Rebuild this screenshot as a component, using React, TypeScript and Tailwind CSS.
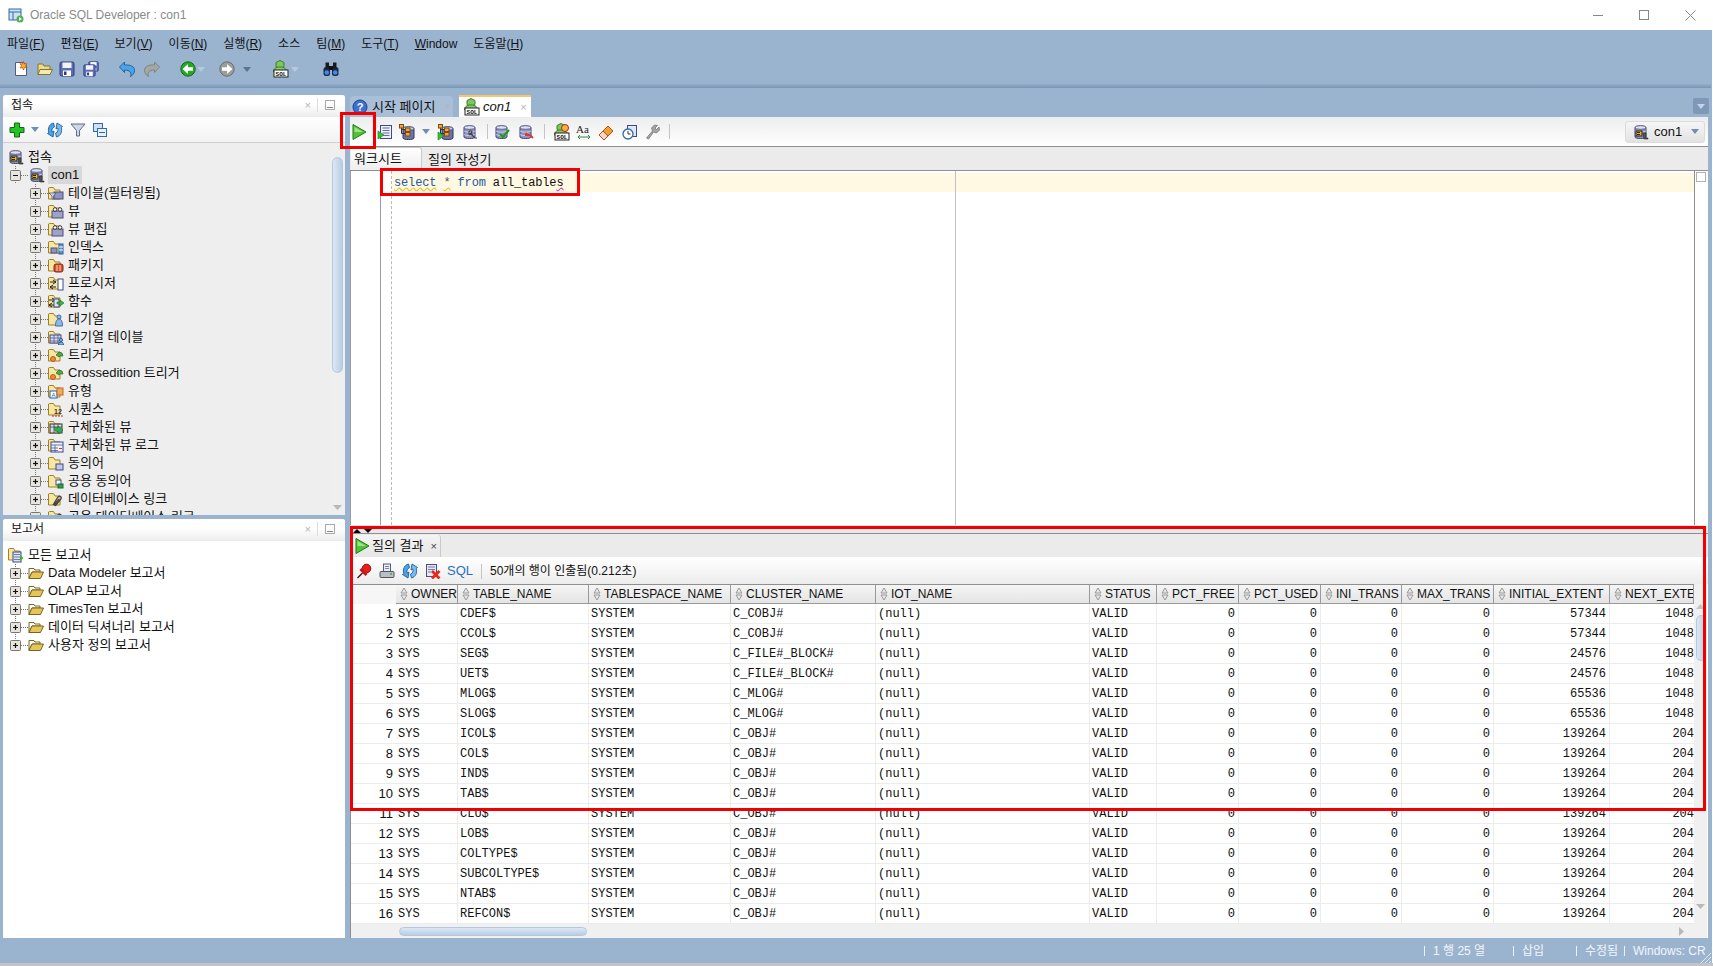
import type { ReactNode } from "react";

const Svg = ({ children, w = 16, h = 16, className = "" }: { children: ReactNode; w?: number; h?: number; className?: string }) => (
  <svg width={w} height={h} viewBox={`0 0 ${w} ${h}`} className={`shrink-0 ${className}`}>
    {children}
  </svg>
);

const DbBody = () => (
  <>
    <path d="M2 3.500C2 1.500 13 1.500 13 3.500V13C13 15 2 15 2 13Z" fill="#8e93c4" stroke="#3f4370" />
    <ellipse cx="7.500" cy="3.500" rx="5.500" ry="1.800" fill="#dfe1f2" stroke="#3f4370" strokeWidth="0.7" />
    <path d="M2 7c2 1.600 9 1.600 11 0M2 10.500c2 1.600 9 1.600 11 0" fill="none" stroke="#d8daf0" strokeWidth="0.8" />
  </>
);

const Db = () => (
  <Svg>
    <DbBody />
    <rect x="3" y="7" width="6" height="5" fill="#f2b90f" stroke="#222" />
    <path d="M4 8.500h3M4 10.500h3" stroke="#222" />
    <path d="M10 9h3v5h2v1h-4z" fill="#555" stroke="#222" strokeWidth="0.6" />
  </Svg>
);

// database with the orange plan boxes, optional green arrow on the left
const PlanDb = ({ arrow = false }: { arrow?: boolean }) => (
  <Svg w={18} h={18}>
    <path d="M5 5.500C5 3.500 16 3.500 16 5.500V15C16 17 5 17 5 15Z" fill="#6f74a8" stroke="#2f3360" />
    <ellipse cx="10.500" cy="5.500" rx="5.500" ry="1.800" fill="#cfd2ea" stroke="#2f3360" strokeWidth="0.7" />
    <path d="M3.500 3.500v7h5M3.500 6.500h5" fill="none" stroke="#333" />
    <rect x="1.500" y="1.500" width="4" height="3.500" fill="#f2a93a" stroke="#7a4a10" />
    <rect x="7.500" y="5" width="4.500" height="3.500" fill="#f2a93a" stroke="#7a4a10" />
    <rect x="7.500" y="9.500" width="4.500" height="3.500" fill="#f2a93a" stroke="#7a4a10" />
    {arrow && <path d="M1 9l6 4-6 4z" fill="#35c235" stroke="#1c7a1c" strokeWidth="0.6" />}
  </Svg>
);

const SqlIcon = ({ badge = false }: { badge?: boolean }) => (
  <Svg w={18} h={18}>
    <path d="M9 0.500l4 2v4l-4 2-4-2v-4z" fill="#7cc85a" stroke="#3f7d2c" />
    <path d="M2.500 12c0-3 2-5 6.500-5s6.500 2 6.500 5z" fill="#8ccb6a" stroke="#3f7d2c" />
    <rect x="3" y="10" width="14" height="7" fill="#fff" stroke="#222" />
    <text x="10" y="16" textAnchor="middle" fontSize="6" fontFamily="'Liberation Mono',monospace" fontWeight="700" fill="#111">SOL</text>
    {badge && <circle cx="13" cy="5" r="3.500" fill="#f4b53a" stroke="#b3261e" />}
  </Svg>
);

const Run = () => (
  <Svg w={18} h={18}>
    <path d="M3 1.500L16 9 3 16.500Z" fill="#52c23a" stroke="#1f7a1a" strokeLinejoin="round" />
    <path d="M4.500 4L13 9 4.500 9Z" fill="#9be67f" />
  </Svg>
);

const Drop = ({ color = "#6f8db5" }: { color?: string }) => (
  <Svg w={8} h={5}>
    <path d="M0 0h8L4 5Z" fill={color} />
  </Svg>
);

const Refresh = () => (
  <Svg>
    <path d="M6.500 1C2.500 2 0.500 6 1.800 10.500L0.500 11.500 6 15 7 9 5.200 10C4.500 8 5 5.500 7.500 4.800Z" fill="#4da3e8" stroke="#1d5d98" strokeWidth="0.9" />
    <path d="M6.500 1C2.500 2 0.500 6 1.800 10.500L0.500 11.500 6 15 7 9 5.200 10C4.500 8 5 5.500 7.500 4.800Z" transform="rotate(180 8 8)" fill="#79bdf2" stroke="#1d5d98" strokeWidth="0.9" />
  </Svg>
);

const Floppy = ({ x = 0, y = 0, s = 16 }: { x?: number; y?: number; s?: number }) => (
  <g transform={`translate(${x} ${y}) scale(${s / 16})`}>
    <rect x="1" y="1" width="14" height="14" rx="1.500" fill="#5d6cb4" stroke="#2f3a78" />
    <rect x="3.500" y="1.500" width="9" height="5.500" fill="#f1f2fa" />
    <rect x="4" y="9.500" width="8" height="5.500" fill="#fff" />
    <rect x="5" y="10.500" width="2.500" height="3.500" fill="#2f3a78" />
  </g>
);

const overlays: Record<string, ReactNode> = {
  filter: (
    <>
      <rect x="6" y="7" width="9" height="7" fill="#8f93c0" stroke="#4b4f7c" />
      <path d="M1 8h7L5.500 11v3L4 14v-3z" fill="#cfd2ea" stroke="#4b4f7c" strokeWidth="0.7" />
    </>
  ),
  view: (
    <>
      <rect x="4" y="8" width="11" height="7" fill="#9ea2c8" stroke="#4b4f7c" />
      <circle cx="7" cy="6.500" r="1.800" fill="#fff" stroke="#333" />
      <circle cx="12" cy="6.500" r="1.800" fill="#fff" stroke="#333" />
    </>
  ),
  index: (
    <>
      <rect x="3" y="9" width="6" height="5" fill="#8f93c0" stroke="#4b4f7c" />
      <rect x="11" y="5" width="4" height="10" fill="#5b9bd5" stroke="#2c5c8c" />
      <path d="M11 8h4M11 11h4" stroke="#fff" />
    </>
  ),
  pack: (
    <>
      <rect x="6" y="7" width="9" height="8" rx="2" fill="#d9533a" stroke="#8a2415" />
      <path d="M9 8v6M12 8v6" stroke="#f6d7a0" />
    </>
  ),
  proc: (
    <>
      <rect x="10" y="4" width="5" height="11" fill="#fff" stroke="#3f4a8a" />
      <path d="M2 7h6M5 5l3 2-3 2M2 12h6M5 10l-3 2 3 2" fill="none" stroke="#222" />
    </>
  ),
  func: (
    <>
      <path d="M1 7h6M4 5l3 2-3 2M1 12h5M4 10l-3 2 3 2" fill="none" stroke="#222" />
      <rect x="6" y="6" width="5" height="8" fill="#dfe3f5" stroke="#3f4a8a" />
      <path d="M9 9h3V7l4 3-4 3v-2H9z" fill="#3cb43c" stroke="#1d741d" strokeWidth="0.6" />
    </>
  ),
  queue: (
    <>
      <circle cx="11" cy="6" r="2" fill="#8bb8e8" stroke="#3d6ea8" />
      <path d="M7.500 15c0-5 1.500-7 3.500-7s3.500 2 3.500 7z" fill="#8bb8e8" stroke="#3d6ea8" />
    </>
  ),
  qtable: (
    <>
      <rect x="2" y="6" width="11" height="8" fill="#d9dcf0" stroke="#3f4a8a" />
      <path d="M2 9h11M2 12h11M6 6v8M10 6v8" stroke="#3f4a8a" strokeWidth="0.7" />
      <circle cx="13" cy="11" r="1.600" fill="#8bb8e8" stroke="#2c5c8c" />
      <path d="M10.500 16c0-2 1-3 2.500-3s2.500 1 2.500 3z" fill="#8bb8e8" stroke="#2c5c8c" />
    </>
  ),
  trigger: (
    <>
      <circle cx="5" cy="12" r="2.500" fill="#ef8a3c" stroke="#c05a14" />
      <path d="M8 8l3-3 3 1 1 3h-3l-1 1z" fill="#4da84a" stroke="#276d25" strokeWidth="0.7" />
    </>
  ),
  type: (
    <>
      <rect x="2" y="8" width="7" height="7" fill="#fff" stroke="#1f5cb0" />
      <rect x="9" y="5" width="6" height="7" fill="#f5a85a" stroke="#b96a20" />
      <text x="5.500" y="14" textAnchor="middle" fontSize="6" fill="#1f5cb0" fontFamily="'Liberation Sans',sans-serif">A</text>
    </>
  ),
  seq: (
    <>
      <text x="6" y="13" fontSize="7" fontWeight="700" fill="#333" fontFamily="'Liberation Sans',sans-serif">12</text>
      <path d="M4 15h11" stroke="#c22" strokeDasharray="2 1" />
    </>
  ),
  mview: (
    <>
      <rect x="2" y="5" width="12" height="9" fill="#d9dcf0" stroke="#333" />
      <path d="M2 8h12M6 5v9M10 5v9" stroke="#333" strokeWidth="0.7" />
      <path d="M6 8l4 1V7l5 4-4 4v-2L7 12z" fill="#2fb04a" stroke="#156b26" strokeWidth="0.6" />
    </>
  ),
  mlog: (
    <>
      <rect x="3" y="5" width="12" height="10" fill="#eef0fa" stroke="#3f4a8a" />
      <path d="M3 8h12M3 11h7M3 13.500h7M7 8v7" stroke="#3f4a8a" strokeWidth="0.7" />
      <path d="M11 11.500h3" stroke="#d33" />
    </>
  ),
  syn: <rect x="8" y="9" width="7" height="6" fill="#c4c8e8" stroke="#3f4a8a" />,
  psyn: (
    <>
      <rect x="8" y="7" width="5" height="5" fill="#fff" stroke="#3f4a8a" />
      <rect x="10" y="11" width="5" height="4" fill="#2fa04a" stroke="#156b26" />
    </>
  ),
  link: <path d="M5 14l5-8c2-2 4 0 3 2l-5 6c-1 1-2 0-1-1l4-5" fill="none" stroke="#444" strokeWidth="1.300" />,
};

const FolderIcon = ({ kind }: { kind?: string }) => (
  <Svg>
    <path d="M0.500 3V14H12V5H7L5.500 2.500H1.500Z" fill="#f6e7a4" stroke="#a3801d" />
    {kind && overlays[kind]}
  </Svg>
);

const OpenFolder = () => (
  <Svg>
    <path d="M1 3.500h5l1 1.500h5v2H4L1 13.500z" fill="#fff" stroke="#7a6420" />
    <path d="M1 13.500L4 7h11.500l-3 6.500z" fill="#e6c65a" stroke="#7a6420" />
  </Svg>
);

const ReportRoot = () => (
  <Svg>
    <path d="M0.500 2V13H12V4H7L5.500 1.500H1.500Z" fill="#f6e7a4" stroke="#a3801d" />
    <rect x="5" y="5" width="8" height="10" fill="#dfe3f5" stroke="#3f4a8a" />
    <path d="M6 7.500h6M6 10h6M6 12.500h6" stroke="#3f4a8a" strokeWidth="0.7" />
    <path d="M12 8l3.500 3-3.500 3z" fill="#35b535" />
  </Svg>
);

// the dotted tree lines and the +/- box
const Expander = ({ minus = false, last = false, w = 19 }: { minus?: boolean; last?: boolean; w?: number }) => (
  <Svg w={w} h={18}>
    <path d={last ? "M6.500 0V9" : "M6.500 0V18"} stroke="#777" strokeDasharray="1 1" />
    <path d={`M12 9.500H${w}`} stroke="#777" strokeDasharray="1 1" />
    <rect x="1.500" y="4.500" width="10" height="10" rx="1" fill="#e6e4dc" stroke="#77756c" />
    <path d="M4 9.500h5" stroke="#111" strokeWidth="1.200" />
    {!minus && <path d="M6.500 7v5" stroke="#111" strokeWidth="1.200" />}
  </Svg>
);

const menus: [string, string][] = [
  ["파일(", "F"],
  ["편집(", "E"],
  ["보기(", "V"],
  ["이동(", "N"],
  ["실행(", "R"],
  ["소스", ""],
  ["팀(", "M"],
  ["도구(", "T"],
  ["", "W"],
  ["도움말(", "H"],
];

const treeItems: [string, string][] = [
  ["테이블(필터링됨)", "filter"],
  ["뷰", "view"],
  ["뷰 편집", "view"],
  ["인덱스", "index"],
  ["패키지", "pack"],
  ["프로시저", "proc"],
  ["함수", "func"],
  ["대기열", "queue"],
  ["대기열 테이블", "qtable"],
  ["트리거", "trigger"],
  ["Crossedition 트리거", "trigger"],
  ["유형", "type"],
  ["시퀀스", "seq"],
  ["구체화된 뷰", "mview"],
  ["구체화된 뷰 로그", "mlog"],
  ["동의어", "syn"],
  ["공용 동의어", "psyn"],
  ["데이터베이스 링크", "link"],
  ["공용 데이터베이스 링크", "link"],
];

const reports = ["Data Modeler 보고서", "OLAP 보고서", "TimesTen 보고서", "데이터 딕셔너리 보고서", "사용자 정의 보고서"];

const columns = ["OWNER", "TABLE_NAME", "TABLESPACE_NAME", "CLUSTER_NAME", "IOT_NAME", "STATUS", "PCT_FREE", "PCT_USED", "INI_TRANS", "MAX_TRANS", "INITIAL_EXTENT", "NEXT_EXTE"];

const rows: [string, string, string, string][] = [
  ["CDEF$", "C_COBJ#", "57344", "1048"],
  ["CCOL$", "C_COBJ#", "57344", "1048"],
  ["SEG$", "C_FILE#_BLOCK#", "24576", "1048"],
  ["UET$", "C_FILE#_BLOCK#", "24576", "1048"],
  ["MLOG$", "C_MLOG#", "65536", "1048"],
  ["SLOG$", "C_MLOG#", "65536", "1048"],
  ["ICOL$", "C_OBJ#", "139264", "204"],
  ["COL$", "C_OBJ#", "139264", "204"],
  ["IND$", "C_OBJ#", "139264", "204"],
  ["TAB$", "C_OBJ#", "139264", "204"],
  ["CLU$", "C_OBJ#", "139264", "204"],
  ["LOB$", "C_OBJ#", "139264", "204"],
  ["COLTYPE$", "C_OBJ#", "139264", "204"],
  ["SUBCOLTYPE$", "C_OBJ#", "139264", "204"],
  ["NTAB$", "C_OBJ#", "139264", "204"],
  ["REFCON$", "C_OBJ#", "139264", "204"],
];

const gridCols = "grid grid-cols-[45px_62px_131px_142px_145px_214px_67px_82px_82px_81px_92px_116px_84px]";
const cell = "border-r border-[#ececec] px-[2px] truncate";
const num = "border-r border-[#ececec] pr-[3px] text-right";

const Close = ({ className = "" }: { className?: string }) => <span className={`font-['Liberation_Sans'] text-[11px] text-[#b5b5b5] ${className}`}>×</span>;

const PanelHead = ({ title }: { title: string }) => (
  <div className="flex h-[22px] items-center bg-gradient-to-b from-white from-40% to-[#ececec] pb-[2px] pl-[8px] pr-[10px] text-[12px] text-[#111]">
    <span>{title}</span>
    <Close className="ml-auto" />
    <span className="ml-[6px] mr-[7px] h-[14px] w-px bg-[#ddd]" />
    <span className="flex h-[10px] w-[10px] items-end justify-center border border-[#aaa] pb-px">
      <span className="h-px w-[6px] bg-[#888]" />
    </span>
  </div>
);

const Sep = ({ className = "" }: { className?: string }) => <span className={`h-[15px] w-px shrink-0 bg-[#c4c4c4] ${className}`} />;

export default function App() {
  return (
    <div className="relative flex h-[966px] w-[1713px] flex-col overflow-hidden bg-white font-['Liberation_Sans','Noto_Sans_CJK_KR',sans-serif] text-[13px] text-[#111]">
      {/* title bar */}
      <div className="flex h-[30px] shrink-0 items-center bg-white pl-[8px]">
        <Svg>
          <rect x="1" y="2" width="12" height="11" fill="#cfe0f2" stroke="#2f6ca8" />
          <path d="M1 5h12M5 5v8" stroke="#2f6ca8" />
          <circle cx="12" cy="12" r="3.500" fill="#4caf50" />
          <path d="M11 10l3 2-3 2z" fill="#fff" />
        </Svg>
        <span className="ml-[6px] text-[12px] text-[#8a8a8a]">Oracle SQL Developer : con1</span>
        <div className="ml-auto flex items-center">
          <span className="h-px w-[10px] bg-[#888]" />
          <span className="ml-[36px] h-[10px] w-[10px] border border-[#888]" />
          <svg width="11" height="11" viewBox="0 0 11 11" className="ml-[36px] mr-[17px]">
            <path d="M0.500 0.500l10 10M10.500 0.500l-10 10" stroke="#888" />
          </svg>
        </div>
      </div>

      <div className="flex min-h-0 flex-1 flex-col border-r border-white bg-[#9ab4d0] pr-px">
        {/* menu */}
        <div className="flex h-[27px] shrink-0 items-center pl-[7px] text-[12px]">
          {menus.map(([label, key], i) => (
            <span key={i} className="mr-[16px]">
              {label}
              {key === "W" ? (
                <>
                  <u>W</u>indow
                </>
              ) : key ? (
                <>
                  <u>{key}</u>)
                </>
              ) : null}
            </span>
          ))}
        </div>

        {/* main toolbar */}
        <div className="flex h-[24px] shrink-0 items-center pl-[13px]">
          <Svg>
            <path d="M2.500 1.500h8l3 3v10h-11z" fill="#fff" stroke="#555a80" />
            <path d="M10.500 0.500l1 2.500 2.500-.3-1.600 2 1.600 2.200-2.500-.4-1 2.500-1-2.500-2.500.4 1.600-2.200-1.600-2 2.500.3z" fill="#f7b41c" stroke="#c2410c" strokeWidth="0.7" />
          </Svg>
          <Svg className="ml-[8px]">
            <path d="M1 13.500V3h5l1 2h6v8.500z" fill="#e8dc8e" stroke="#8a7220" />
            <path d="M1 13.500l2-5h12.500l-2.500 5z" fill="#f3ecb0" stroke="#8a7220" />
          </Svg>
          <Svg className="ml-[6px]">
            <Floppy />
          </Svg>
          <Svg className="ml-[8px]">
            <Floppy x={5} y={0} s={11} />
            <Floppy x={0} y={3} s={13} />
          </Svg>
          <Svg className="ml-[20px]">
            <path d="M0.500 6l5-5v3c6-.5 10 1.500 10 5.500 0 2.500-1.500 4.500-4 6 1.500-3.500-.5-6.500-6-6.500v2.500z" fill="#4da3e8" stroke="#1d5d98" strokeWidth="0.9" />
          </Svg>
          <Svg className="ml-[9px]">
            <path d="M15.500 6l-5-5v3c-6-.5-10 1.500-10 5.500 0 2.500 1.500 4.500 4 6-1.500-3.500.5-6.500 6-6.500v2.500z" fill="#a3a8a3" stroke="#7a807a" strokeWidth="0.9" />
          </Svg>
          <Svg className="ml-[20px]">
            <circle cx="8" cy="8" r="7.200" fill="#25a825" stroke="#136a13" />
            <path d="M2.500 8L8 3v3.200h5v3.600H8V13z" fill="#fff" />
          </Svg>
          <span className="ml-[1px]">
            <Drop color="#b9c8dc" />
          </span>
          <Svg className="ml-[14px]">
            <circle cx="8" cy="8" r="7.200" fill="#9a9e9a" stroke="#6a6f6a" />
            <path d="M13.500 8L8 3v3.200H3v3.600h5V13z" fill="#fff" />
          </Svg>
          <span className="ml-[8px]">
            <Drop color="#5f7390" />
          </span>
          <span className="ml-[20px]">
            <SqlIcon />
          </span>
          <span className="ml-[2px]">
            <Drop color="#b9c8dc" />
          </span>
          <Svg className="ml-[24px]">
            <rect x="0.500" y="6" width="6.500" height="9" rx="2.500" fill="#1b2947" />
            <rect x="9" y="6" width="6.500" height="9" rx="2.500" fill="#1b2947" />
            <rect x="2.500" y="1.500" width="3.500" height="6" fill="#1a1a1a" />
            <rect x="10" y="1.500" width="3.500" height="6" fill="#1a1a1a" />
            <rect x="6" y="5" width="4" height="4" fill="#111" />
            <circle cx="3.800" cy="11.500" r="2.300" fill="#3f8be8" />
            <circle cx="12.200" cy="11.500" r="2.300" fill="#3f8be8" />
          </Svg>
        </div>

        <div className="h-[7px] shrink-0 bg-gradient-to-b from-[#9ab4d0] from-30% to-[#7a95b4]" />

        {/* workspace */}
        <div className="flex min-h-0 flex-1 gap-[5px] pl-[3px] pr-[3px] pt-[7px]">
          {/* left column */}
          <div className="flex w-[342px] shrink-0 flex-col gap-[4px]">
            <div className="flex h-[420px] shrink-0 flex-col overflow-hidden rounded-t-[3px] bg-[#eeeeee]">
              <PanelHead title="접속" />
              <div className="flex h-[26px] shrink-0 items-center border-b border-[#cfcfcf] bg-gradient-to-b from-white to-[#f2f2f2] pl-[6px]">
                <Svg>
                  <path d="M5.500 1h5v4.500H15v5h-4.500V15h-5v-4.500H1v-5h4.500z" fill="#25c425" stroke="#136a13" />
                </Svg>
                <span className="ml-[6px]">
                  <Drop />
                </span>
                <span className="ml-[8px]">
                  <Refresh />
                </span>
                <Svg className="ml-[7px]">
                  <path d="M1 2h14L9.500 8.500V14h-3V8.500z" fill="#cfd6e6" stroke="#5d6b8c" />
                </Svg>
                <Svg className="ml-[6px]">
                  <rect x="1.500" y="1.500" width="9" height="8" fill="#cfe0f5" stroke="#2f6ca8" />
                  <rect x="5.500" y="6.500" width="9" height="8" fill="#e8f0fa" stroke="#2f6ca8" />
                  <path d="M7 10.500h6" stroke="#2f6ca8" strokeWidth="1.200" />
                </Svg>
              </div>
              <div className="flex min-h-0 flex-1">
                <div className="min-w-0 flex-1 overflow-hidden pt-[5px]">
                  <div className="flex h-[18px] items-center pl-[5px]">
                    <Db />
                    <span className="ml-[4px]">접속</span>
                  </div>
                  <div className="flex h-[18px] items-center pl-[6px]">
                    <Expander minus />
                    <span className="ml-px">
                      <Db />
                    </span>
                    <span className="ml-[3px] bg-[#d8d8d8] px-[3px] leading-[18px]">con1</span>
                  </div>
                  {treeItems.map(([label, kind]) => (
                    <div key={label} className="flex h-[18px] items-center whitespace-nowrap pl-[26px]">
                      <Expander />
                      <FolderIcon kind={kind} />
                      <span className="ml-[4px]">{label}</span>
                    </div>
                  ))}
                </div>
                <div className="flex w-[15px] shrink-0 flex-col items-center bg-[#efefef] pt-[14px]">
                  <div className="h-[216px] w-[11px] rounded-full border border-[#b4c8df] bg-gradient-to-r from-[#dde8f4] to-[#b9cde3]" />
                  <svg width="9" height="5" viewBox="0 0 9 5" className="mb-[5px] mt-auto">
                    <path d="M0 0h9L4.500 5Z" fill="#b8b8b8" />
                  </svg>
                </div>
              </div>
            </div>

            <div className="flex min-h-0 flex-1 flex-col overflow-hidden rounded-t-[3px] bg-white">
              <PanelHead title="보고서" />
              <div className="pt-[5px]">
                <div className="flex h-[18px] items-center pl-[5px]">
                  <ReportRoot />
                  <span className="ml-[4px]">모든 보고서</span>
                </div>
                {reports.map((r, i) => (
                  <div key={r} className="flex h-[18px] items-center pl-[6px]">
                    <Expander last={i === reports.length - 1} />
                    <OpenFolder />
                    <span className="ml-[4px]">{r}</span>
                  </div>
                ))}
              </div>
            </div>
          </div>

          {/* right column */}
          <div className="flex min-w-0 flex-1 flex-col">
            {/* document tabs */}
            <div className="flex h-[22px] shrink-0 items-end">
              <div className="flex h-[21px] w-[103px] items-center rounded-t-[4px] bg-[#a9bfd7] pl-[2px]">
                <Svg>
                  <circle cx="8" cy="8" r="7" fill="#3f6fd1" stroke="#1f3f8f" />
                  <text x="8" y="12" textAnchor="middle" fontSize="11" fontWeight="700" fill="#fff" fontFamily="'Liberation Sans',sans-serif">?</text>
                </Svg>
                <span className="ml-[4px]">시작 페이지</span>
                <Close className="ml-[9px]" />
              </div>
              <div className="ml-[6px] flex h-[22px] w-[72px] items-center border-t-[2px] border-[#f7c56b] bg-white pl-[3px]">
                <SqlIcon />
                <span className="ml-[3px] italic">con1</span>
                <Close className="ml-[9px]" />
              </div>
              <div className="mb-[3px] ml-auto mr-[-1px] flex h-[16px] w-[16px] items-center justify-center rounded-[2px] bg-[#7f98b7]">
                <Drop color="#c4d3e6" />
              </div>
            </div>

            <div className="flex min-h-0 flex-1 flex-col bg-white">
              {/* worksheet toolbar */}
              <div className="flex h-[29px] shrink-0 items-center bg-gradient-to-b from-[#ededed] to-white">
                <Run />
                <Svg className="ml-[9px]">
                  <rect x="3.500" y="1.500" width="11" height="13" fill="#eef0fa" stroke="#3f4a8a" />
                  <path d="M5.500 4h7M5.500 6.500h7M5.500 9h7M5.500 11.500h7" stroke="#3f4a8a" strokeWidth="0.8" />
                  <path d="M1 7l6 4-6 4z" fill="#35c235" stroke="#1c7a1c" strokeWidth="0.6" />
                </Svg>
                <span className="ml-[5px]">
                  <PlanDb />
                </span>
                <span className="ml-[6px]">
                  <Drop />
                </span>
                <span className="ml-[7px]">
                  <PlanDb arrow />
                </span>
                <Svg className="ml-[7px]">
                  <DbBody />
                  <path d="M8 9l5 5M13 14l2 0M7 8c1-2 3-1 3 0l-1 1 1 1c0 1-2 1-3 0z" fill="#eee" stroke="#444" strokeWidth="1.200" />
                </Svg>
                <Sep className="ml-[9px]" />
                <span className="ml-[6px]">
                  <Svg>
                    <DbBody />
                    <path d="M6 10l3 3 6-7" fill="none" stroke="#1c9a1c" strokeWidth="2.200" />
                  </Svg>
                </span>
                <span className="ml-[8px]">
                  <Svg>
                    <DbBody />
                    <path d="M7 11h5l3 3M7 11l2-2" fill="none" stroke="#d83b2d" strokeWidth="1.800" />
                  </Svg>
                </span>
                <Sep className="ml-[10px]" />
                <span className="ml-[7px]">
                  <SqlIcon badge />
                </span>
                <Svg className="ml-[6px]">
                  <text x="0" y="9" fontSize="11" fontFamily="'Liberation Serif',serif" fill="#222">Aa</text>
                  <path d="M2 13h12M2 13l2-2M2 13l2 2M14 13l-2-2M14 13l-2 2" stroke="#2f8a3f" fill="none" />
                </Svg>
                <Svg className="ml-[6px]">
                  <path d="M1 11L10 2l5 5-9 9z" fill="#f0a030" stroke="#b0501a" />
                  <path d="M1 11l4-4 5 5-4 4z" fill="#f6d5c8" stroke="#b0501a" />
                </Svg>
                <Svg className="ml-[8px]">
                  <rect x="5.500" y="1.500" width="9" height="11" fill="#dfe8f8" stroke="#3f4a8a" />
                  <circle cx="6" cy="10" r="5" fill="#fff" stroke="#2f6ca8" strokeWidth="1.300" />
                  <path d="M6 7v3h2.500" stroke="#333" fill="none" />
                </Svg>
                <Svg className="ml-[7px]">
                  <path d="M1.500 14l6-7-1-3 3-3 3 .5-2.500 2.500 1.500 1.500 2.500-2.500.5 3-3 3-3-1-5 7z" fill="#a5a5a5" stroke="#777" strokeWidth="0.8" />
                </Svg>
                <Sep className="ml-[8px]" />
                <div className="ml-auto mr-[3px] flex h-[22px] w-[80px] items-center rounded-[3px] border border-[#dcdcdc] bg-gradient-to-b from-[#f6f6f6] to-[#e2e2e2] pl-[7px]">
                  <Db />
                  <span className="ml-[5px]">con1</span>
                  <span className="ml-[9px]">
                    <Drop />
                  </span>
                </div>
              </div>

              {/* sub tabs */}
              <div className="flex h-[24px] shrink-0 items-end border-t border-[#8f8f8f] bg-[#ebebeb] pl-px">
                <div className="flex h-[23px] w-[71px] items-center rounded-tr-[3px] border-r border-t border-[#c9c9c9] bg-gradient-to-b from-white to-[#eeeeee] pl-[3px] text-[13px]">워크시트</div>
                <span className="ml-[6px] self-center pt-[2px]">질의 작성기</span>
              </div>

              {/* editor */}
              <div className="relative flex h-[355px] shrink-0 border-t border-[#8f8f8f]">
                <div className="w-[31px] shrink-0 border-l border-r border-[#9d9d9d]" />
                <div className="w-[11px] shrink-0 border-r border-dashed border-[#bbb]" />
                <div className="min-w-0 flex-1 border-r border-[#8f8f8f] pt-[2px]">
                  <div className="flex h-[19px] items-center bg-[#fff8e3] pl-[2px] font-['Liberation_Mono',monospace] text-[12px] tracking-[-0.14px]">
                    <span className="text-[#22589e] underline decoration-[#e4c52e] decoration-wavy">select</span>
                    <span>&nbsp;</span>
                    <span className="text-[#555] underline decoration-[#e4c52e] decoration-wavy">*</span>
                    <span>&nbsp;</span>
                    <span className="text-[#22589e]">from</span>
                    <span>&nbsp;all_table</span>
                    <span className="underline decoration-[#d040c0] decoration-wavy">s</span>
                  </div>
                </div>
                <div className="w-[13px] shrink-0 pl-px pt-[1px]">
                  <div className="h-[10px] w-[10px] border border-[#b0b0b0]" />
                </div>
                <div className="absolute bottom-0 left-[605px] top-0 w-px bg-[#c0c0c0]" />
              </div>

              {/* splitter */}
              <div className="flex h-[8px] shrink-0 items-end gap-[3px] bg-[#e8e8e8] pl-[3px]">
                <span className="h-0 w-0 border-x-[4px] border-b-[4px] border-x-transparent border-b-black" />
                <span className="h-0 w-0 border-x-[4px] border-t-[4px] border-x-transparent border-t-black" />
              </div>

              {/* query result */}
              <div className="flex min-h-0 flex-1 flex-col border-l border-t border-[#8f8f8f]">
                <div className="flex h-[23px] shrink-0 items-end bg-[#ebebeb]">
                  <div className="flex h-[22px] w-[90px] items-center rounded-tr-[3px] border-r border-[#c9c9c9] bg-gradient-to-b from-[#f4f4f4] to-[#e6e6e6] pl-[2px]">
                    <Run />
                    <span className="ml-px">질의 결과</span>
                    <span className="ml-[7px] font-['Liberation_Sans'] text-[11px] text-[#444]">×</span>
                  </div>
                </div>
                <div className="flex h-[27px] shrink-0 items-center border-t border-white bg-gradient-to-b from-white to-[#ececec] pl-[5px]">
                  <Svg>
                    <circle cx="10.500" cy="5.500" r="4.300" fill="#e81c1c" stroke="#8a1010" />
                    <path d="M6.500 10L1.500 15" stroke="#5a0c0c" strokeWidth="1.500" />
                    <path d="M4.500 6l6 6" stroke="#c01818" strokeWidth="3" />
                  </Svg>
                  <Svg className="ml-[7px]">
                    <rect x="4.500" y="1" width="7" height="7.500" fill="#e8eaf6" stroke="#555a80" />
                    <path d="M6 3.500h4M6 5.500h4" stroke="#555a80" strokeWidth="0.7" />
                    <rect x="1" y="8.500" width="14" height="6" rx="1" fill="#b9bdcc" stroke="#555" />
                    <path d="M11 11h2" stroke="#35b535" strokeWidth="1.400" />
                  </Svg>
                  <span className="ml-[7px]">
                    <Refresh />
                  </span>
                  <Svg className="ml-[7px]">
                    <rect x="1.500" y="1.500" width="10" height="12" fill="#e4e6f4" stroke="#4a4f7c" />
                    <path d="M3 4h7M3 6.500h7M3 9h3" stroke="#4a4f7c" strokeWidth="0.7" />
                    <path d="M7 8l7.500 7.500M14.500 8L7 15.500" stroke="#e8281c" strokeWidth="2.800" />
                  </Svg>
                  <span className="ml-[6px] text-[#2a6ebd]">SQL</span>
                  <Sep className="ml-[8px] h-[11px]" />
                  <span className="ml-[8px] text-[12px]">50개의 행이 인출됨(0.212초)</span>
                </div>

                <div className="flex min-h-0 flex-1">
                  <div className="flex w-[1343px] shrink-0 flex-col">
                    <div className={`${gridCols} h-[20px] shrink-0 border-t border-[#8f8f8f] bg-white text-[12px]`}>
                      <div className="bg-[#f6f6f6]" />
                      {columns.map((c) => (
                        <div key={c} className="flex items-center overflow-hidden whitespace-nowrap border-b border-r border-b-[#9a9a9a] border-r-[#9a9a9a] bg-gradient-to-b from-[#f5f5f5] to-[#e4e4e4] pl-[4px]">
                          <svg width="8" height="14" viewBox="0 0 8 14" className="mr-[3px] shrink-0">
                            <path d="M4 1L7 6H1ZM4 13L1 8H7Z" fill="#e8e8e8" stroke="#9a9a9a" />
                          </svg>
                          {c}
                        </div>
                      ))}
                    </div>
                    {rows.map((r, i) => (
                      <div key={r[0]} className={`${gridCols} h-[20px] shrink-0 items-stretch border-b border-[#ececec] font-['Liberation_Mono',monospace] text-[12px] leading-[21px]`}>
                        <div className="pr-[3px] text-right font-['Liberation_Sans',sans-serif] text-[13px] leading-[19px]">{i + 1}</div>
                        <div className={cell}>SYS</div>
                        <div className={cell}>{r[0]}</div>
                        <div className={cell}>SYSTEM</div>
                        <div className={cell}>{r[1]}</div>
                        <div className={cell}>(null)</div>
                        <div className={cell}>VALID</div>
                        <div className={num}>0</div>
                        <div className={num}>0</div>
                        <div className={num}>0</div>
                        <div className={num}>0</div>
                        <div className={num}>{r[2]}</div>
                        <div className="text-right">{r[3]}</div>
                      </div>
                    ))}
                    {/* horizontal scrollbar */}
                    <div className="flex h-[14px] shrink-0 items-center bg-[#f0f0f0] pl-[48px]">
                      <div className="h-[9px] w-[188px] rounded-full border border-[#b4c8df] bg-gradient-to-b from-[#dde8f4] to-[#b9cde3]" />
                      <svg width="5" height="9" viewBox="0 0 5 9" className="ml-auto mr-[10px]">
                        <path d="M0 0l5 4.500L0 9Z" fill="#b8b8b8" />
                      </svg>
                    </div>
                  </div>
                  <div className="flex w-[13px] shrink-0 flex-col items-center bg-[#f0f0f0] pt-[20px]">
                    <svg width="9" height="5" viewBox="0 0 9 5">
                      <path d="M0 5h9L4.500 0Z" fill="#c4c4c4" />
                    </svg>
                    <div className="mt-[6px] h-[46px] w-[10px] rounded-full border border-[#b4c8df] bg-gradient-to-r from-[#dde8f4] to-[#b9cde3]" />
                    <svg width="9" height="5" viewBox="0 0 9 5" className="mt-[243px]">
                      <path d="M0 0h9L4.500 5Z" fill="#b8b8b8" />
                    </svg>
                  </div>
                </div>
              </div>
            </div>
          </div>
        </div>

        {/* status bar */}
        <div className="relative flex h-[25px] shrink-0 items-center whitespace-nowrap pl-[1424px] text-[12px] text-[#f2f5f9]">
          <span className="h-[10px] w-px bg-[#eef2f7]" />
          <span className="ml-[8px] w-[80px]">1 행 25 열</span>
          <span className="h-[10px] w-px bg-[#eef2f7]" />
          <span className="ml-[8px] w-[54px]">삽입</span>
          <span className="h-[10px] w-px bg-[#eef2f7]" />
          <span className="ml-[8px] w-[39px]">수정됨</span>
          <span className="h-[10px] w-px bg-[#eef2f7]" />
          <span className="ml-[8px]">Windows: CR</span>
          <svg width="10" height="10" viewBox="0 0 10 10" className="absolute bottom-0 right-0">
            <path d="M0 10L10 0M4 10l6-6M8 10l2-2" stroke="#e6ecf3" />
          </svg>
        </div>
      </div>
      <div className="h-[3px] shrink-0 bg-[#c4c4c4]" />

      {/* red annotation boxes on top of the screenshot */}
      <div className="absolute left-[340px] top-[112px] h-[37px] w-[36px] border-[3px] border-[#f00000]" />
      <div className="absolute left-[380px] top-[168px] h-[28px] w-[200px] border-[3px] border-[#f00000]" />
      <div className="absolute left-[350px] top-[526px] h-[285px] w-[1356px] border-[3px] border-[#f00000]" />
    </div>
  );
}
